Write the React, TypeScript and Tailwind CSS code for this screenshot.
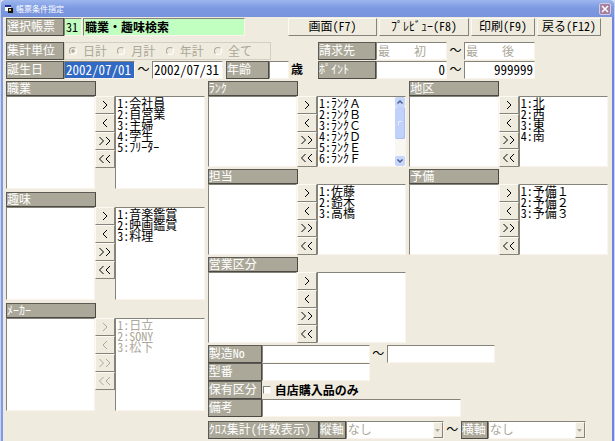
import { useState, type ReactNode } from "react";
import clsx from "clsx";

/* ===== Types ===== */
type PickerProps = {
  title: string;
  items: string[];
  tall?: boolean;
  disabled?: boolean;
  scroll?: boolean;
};

/* ===== Data ===== */
const UNITS = ["日計", "月計", "年計", "全て"];

const MOVES = [
  { sign: ">", name: "追加" },
  { sign: "<", name: "解除" },
  { sign: ">>", name: "全て追加" },
  { sign: "<<", name: "全て解除" },
];

const LEFT: PickerProps[] = [
  { title: "職業", items: ["1:会社員", "2:自営業", "3:主婦", "4:学生", "5:ﾌﾘｰﾀｰ"], tall: true },
  { title: "趣味", items: ["1:音楽鑑賞", "2:映画鑑賞", "3:料理"], tall: true },
  { title: "ﾒｰｶｰ", items: ["1:日立", "2:SONY", "3:松下"], tall: true, disabled: true },
];

const RIGHT: PickerProps[] = [
  {
    title: "ﾗﾝｸ",
    items: ["1:ﾗﾝｸＡ", "2:ﾗﾝｸＢ", "3:ﾗﾝｸＣ", "4:ﾗﾝｸＤ", "5:ﾗﾝｸＥ", "6:ﾗﾝｸＦ"],
    scroll: true,
  },
  { title: "地区", items: ["1:北", "2:西", "3:東", "4:南"] },
  { title: "担当", items: ["1:佐藤", "2:鈴木", "3:高橋"] },
  { title: "予備", items: ["1:予備１", "2:予備２", "3:予備３"] },
  { title: "営業区分", items: [] },
];

/* ===== Shared styles ===== */
const sunken =
  "border border-t-[#85837a] border-l-[#85837a] border-r-[#fbf3ec] border-b-[#fbf3ec] rounded-none outline-none";
const raised =
  "border border-t-[#fcfaf3] border-l-[#fcfaf3] border-r-[#85837a] border-b-[#85837a] bg-[#efecdf]";
const box = clsx(sunken, "h-[18px] min-w-0 px-px pb-0.5 leading-[14px]");
const field = clsx(box, "bg-white");
const greenField = clsx(box, "bg-[#c0ffc0]");
const command = clsx(raised, "pb-0.5 leading-[14px] whitespace-nowrap");
const plate =
  "block shrink-0 whitespace-nowrap border border-t-[#5c5a52] border-l-[#5c5a52] border-r-[#4a4943] border-b-[#4a4943] bg-[#aba899] text-white";

/* ===== Parts ===== */
function Label({ htmlFor, className, children }: { htmlFor?: string; className: string; children: ReactNode }) {
  return (
    <label htmlFor={htmlFor} className={clsx(plate, "h-[18px] leading-[13px]", className)}>
      {children}
    </label>
  );
}

function Tilde() {
  return <span className="w-[17px] shrink-0 text-center">～</span>;
}

function Chevron({ up }: { up?: boolean }) {
  return (
    <svg viewBox="0 0 10 10" className="size-[10px]" fill="none" stroke="#4d6185" strokeWidth="1.5">
      <path d={up ? "M2.500 6.500 5 4 7.500 6.500" : "M2.500 3.500 5 6 7.500 3.500"} />
    </svg>
  );
}

function ScrollBar() {
  return (
    <div className="flex w-[10px] shrink-0 flex-col bg-[#f8f7f2]">
      <button aria-label="上へ" className="h-[10px] rounded-xs bg-[#c5d5fc]">
        <Chevron up />
      </button>
      <div className="flex h-8 items-center justify-center rounded-xs border-r border-b border-[#a9bff0] bg-[#c1d1fb]">
        <span className="h-1 w-1 border-t border-l border-[#e8effe]" />
      </div>
      <button aria-label="下へ" className="mt-auto h-[10px] rounded-xs bg-[#c5d5fc]">
        <Chevron />
      </button>
    </div>
  );
}

function Picker({ title, items, tall, disabled, scroll }: PickerProps) {
  return (
    <section className="flex flex-col">
      <h2 className={clsx(plate, "h-[15px] w-[90px] leading-[12px]")}>{title}</h2>
      <div className={clsx("flex", tall ? "h-[93px]" : "h-[71px]")}>
        <select multiple aria-label={`${title} 選択済み`} disabled={disabled} className={clsx(sunken, "min-w-0 flex-1 bg-white opacity-100")} />
        <div className="flex w-5 shrink-0 flex-col">
          {MOVES.map((m) => (
            <button
              key={m.name}
              aria-label={`${title} ${m.name}`}
              disabled={disabled}
              className={clsx(raised, "flex h-[18px] items-center justify-center", disabled && "text-[#aba899]")}
            >
              <svg viewBox="0 0 14 10" className="h-[10px] w-[14px]" fill="none" stroke="currentColor">
                {m.sign === ">" && <path d="M5 1 9 5 5 9" />}
                {m.sign === "<" && <path d="M9 1 5 5 9 9" />}
                {m.sign === ">>" && <path d="M1.500 1 5.500 5 1.500 9M8 1 12 5 8 9" />}
                {m.sign === "<<" && <path d="M5.500 1 1.500 5 5.500 9M12 1 8 5 12 9" />}
              </svg>
            </button>
          ))}
        </div>
        <div className={clsx(sunken, "flex min-w-0 flex-1 bg-white")}>
          <select
            multiple
            aria-label={`${title} 候補`}
            disabled={disabled}
            className="min-w-0 flex-1 overflow-hidden bg-white p-0 opacity-100 outline-none"
          >
            {items.map((item) => (
              <option
                key={item}
                className={clsx("flex h-[11px] min-h-0 items-center p-0 pl-px leading-[11px]", disabled ? "text-[#aba899]" : "text-black")}
              >
                {item}
              </option>
            ))}
          </select>
          {scroll && <ScrollBar />}
        </div>
      </div>
    </section>
  );
}

function AxisSelect({ id }: { id: string }) {
  return (
    <div className={clsx(sunken, "flex h-[18px] w-[98px] bg-white")}>
      <select id={id} disabled className="min-w-0 flex-1 appearance-none bg-white pb-0.5 pl-px leading-[14px] text-[#aba899] opacity-100">
        <option>なし</option>
      </select>
      <span className={clsx(raised, "flex w-[10px] items-center justify-center")}>
        <svg viewBox="0 0 5 3" className="h-[3px] w-[5px]" fill="#aba899">
          <path d="M0 0h5L2.500 3z" />
        </svg>
      </span>
    </div>
  );
}

export default function App() {
  const [from, setFrom] = useState("2002/07/01");
  const [to, setTo] = useState("2002/07/31");

  return (
    <div className="flex min-h-screen flex-col border-x border-[#c9d4f2] bg-[#efecdf] font-['Noto_Sans_Mono_CJK_JP','Noto_Sans_CJK_JP',sans-serif] text-[12px] leading-4 text-black">
      {/* Title bar */}
      <header className="flex h-[17px] items-center gap-[3px] rounded-t-sm bg-linear-to-b from-[#9db6ee] via-[#7b99e1] to-[#7893dc] pt-px pr-[3px] pl-1 text-white">
        <svg viewBox="0 0 8 8" className="size-2">
          <path d="M0 1h6v5H0z" fill="#fff" />
          <path d="M0 0h6v2H0z" fill="#223a8c" />
          <path d="M3 3h5v5H3z" fill="#111" />
          <path d="M4 4h2v2H4z" fill="#e8c840" />
        </svg>
        <h1 className="text-[8px] font-normal">帳票条件指定</h1>
        <button aria-label="閉じる" className="ml-auto flex size-3 items-center justify-center rounded-xs border border-[#d5cbe4] bg-[#a57f9f]">
          <svg viewBox="0 0 8 8" className="size-2" stroke="#fff" strokeWidth="1.5">
            <path d="M1 1l6 6M7 1 1 7" />
          </svg>
        </button>
      </header>

      <main className="flex flex-1 flex-col border-x-2 border-r-[#6f86dc] border-l-[#7f9ae8] pt-px pr-1 pl-[3px]">
        {/* Report + function keys */}
        <div className="flex h-[18px]">
          <Label htmlFor="report" className="w-[58px]">選択帳票</Label>
          <input id="report" defaultValue="31" className={clsx(greenField, "w-[18px]")} />
          <input aria-label="帳票名" defaultValue="職業・趣味検索" className={clsx(greenField, "ml-px w-[162px] font-bold")} />
          <div className="mr-[7px] ml-auto flex gap-0.5">
            <button className={clsx(command, "w-[89px]")}>画面(F7)</button>
            <button className={clsx(command, "w-[90px]")}>ﾌﾟﾚﾋﾞｭｰ(F8)</button>
            <button className={clsx(command, "w-16")}>印刷(F9)</button>
            <button className={clsx(command, "w-16")}>戻る(F12)</button>
          </div>
        </div>

        {/* Range conditions */}
        <div className="mt-1.5 flex">
          <div className="flex w-[312px] flex-col gap-px">
            <fieldset disabled aria-labelledby="unit-title" className="flex h-[18px] text-[#aba899]">
              <span id="unit-title" className={clsx(plate, "w-[58px] leading-[13px]")}>集計単位</span>
              <div className="flex w-[207px] items-center justify-between border border-[#d3d0c2] pr-[18px] pl-1">
                {UNITS.map((unit, i) => (
                  <label key={unit} className="flex items-center gap-1.5">
                    <input
                      type="radio"
                      name="unit"
                      defaultChecked={i === 0}
                      className="size-2 appearance-none rounded-full border border-t-[#aba899] border-r-white border-b-white border-l-[#aba899] checked:bg-[radial-gradient(#aba899_35%,transparent_40%)]"
                    />
                    {unit}
                  </label>
                ))}
              </div>
            </fieldset>
            <div className="flex h-[18px]">
              <Label htmlFor="birth" className="w-[58px]">誕生日</Label>
              <input
                id="birth"
                value={from}
                onChange={(e) => setFrom(e.target.value)}
                className={clsx(box, "w-[71px] bg-[#316ac5] text-[13px] text-white")}
              />
              <Tilde />
              <input
                aria-label="誕生日 終了"
                value={to}
                onChange={(e) => setTo(e.target.value)}
                className={clsx(field, "w-[71px] text-[13px]")}
              />
              <Label htmlFor="age" className="ml-[3px] w-[43px]">年齢</Label>
              <input id="age" className={clsx(field, "w-5")} />
              <span className="ml-0.5 font-bold">歳</span>
            </div>
          </div>
          <div className="flex flex-col gap-px">
            <div className="flex h-[18px]">
              <Label htmlFor="bill" className="w-[58px]">請求先</Label>
              <input id="bill" disabled defaultValue="最　　初" className={clsx(field, "w-[71px] text-[#aba899]")} />
              <Tilde />
              <input aria-label="請求先 終了" disabled defaultValue="最　　後" className={clsx(field, "w-[71px] text-[#aba899]")} />
            </div>
            <div className="flex h-[18px]">
              <Label htmlFor="point" className="w-[58px]">ﾎﾟｲﾝﾄ</Label>
              <input id="point" defaultValue="0" className={clsx(field, "w-[71px] text-right text-[13px]")} />
              <Tilde />
              <input aria-label="ﾎﾟｲﾝﾄ 終了" defaultValue="999999" className={clsx(field, "w-[71px] text-right text-[13px]")} />
            </div>
          </div>
        </div>

        {/* Pickers */}
        <div className="mt-0.5 grid grid-cols-3 gap-x-[3px]">
          <div className="flex flex-col gap-[3px]">
            {LEFT.map((p) => (
              <Picker key={p.title} {...p} />
            ))}
          </div>
          <div className="col-span-2">
            <div className="grid grid-cols-2 gap-x-[3px] gap-y-0.5">
              {RIGHT.map((p) => (
                <Picker key={p.title} {...p} />
              ))}
            </div>

            {/* Product conditions */}
            <div className="mt-0.5 flex flex-col">
              <div className="flex h-[18px]">
                <Label htmlFor="serial" className="w-[54px]">製造No</Label>
                <input id="serial" className={clsx(field, "w-[108px]")} />
                <Tilde />
                <input aria-label="製造No 終了" className={clsx(field, "w-[108px]")} />
              </div>
              <div className="flex h-[18px]">
                <Label htmlFor="model" className="w-[54px]">型番</Label>
                <input id="model" className={clsx(field, "w-[108px]")} />
              </div>
              <div className="flex h-[18px] items-center">
                <Label htmlFor="own" className="w-[54px]">保有区分</Label>
                <input id="own" type="checkbox" className={clsx(sunken, "ml-px size-2 appearance-none bg-white checked:bg-black")} />
                <label htmlFor="own" className="ml-1 font-bold">自店購入品のみ</label>
              </div>
              <div className="flex h-[18px]">
                <Label htmlFor="note" className="w-[54px]">備考</Label>
                <input id="note" className={clsx(field, "w-[199px]")} />
              </div>
              <div className="mt-1 flex h-[18px]">
                <span className={clsx(plate, "w-[111px] leading-[13px]")}>ｸﾛｽ集計(件数表示)</span>
                <Label htmlFor="axis-y" className="w-[27px]">縦軸</Label>
                <AxisSelect id="axis-y" />
                <Tilde />
                <Label htmlFor="axis-x" className="w-[27px]">横軸</Label>
                <AxisSelect id="axis-x" />
              </div>
            </div>
          </div>
        </div>
      </main>
    </div>
  );
}
